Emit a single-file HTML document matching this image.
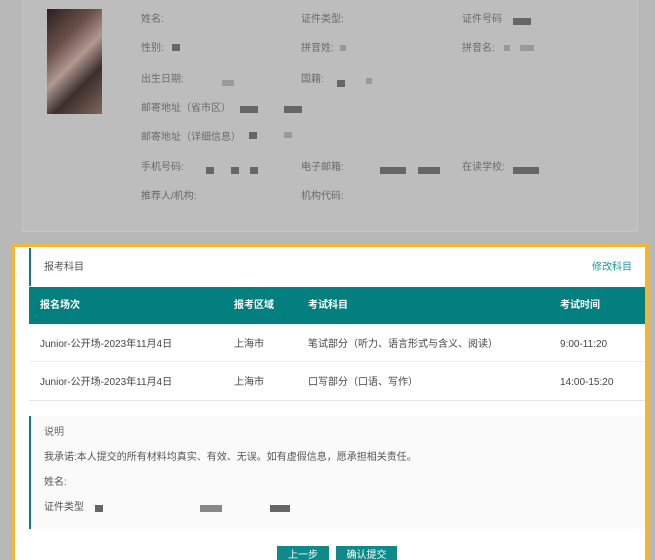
<!DOCTYPE html>
<html style="overflow:hidden;height:560px"><head><meta charset="utf-8"><style>
*{margin:0;padding:0;box-sizing:border-box}
body{width:655px;height:560px;overflow:hidden;background:#b8b8b8;font-family:"Liberation Sans","Noto Sans CJK SC",sans-serif;font-size:10px;line-height:14px;color:#555;position:relative}
.abs{position:absolute}
.top{left:22px;top:0;width:616px;height:232px;background:#bdbdbd;border:1px solid #c6c6c6;border-top:none}
.lbl{position:absolute;color:#6a6a6a;font-size:10px}
.blk{position:absolute;background:#666;width:8px;height:7px}
.bl2{position:absolute;background:#999;width:6px;height:6px}
.frame{left:11px;top:243px;width:638px;height:322px;border:4px solid #f2b632;background:#fff}
.th{color:#fff;font-size:10px;font-weight:bold}
.td{font-size:10px;color:#444}
</style></head><body>
<div class="abs top"></div>
<div class="abs" style="left:47px;top:9px;width:55px;height:105px;background:linear-gradient(135deg,#2a2022,#6a5048 30%,#b09890 50%,#3a2e2c 70%,#80685c);"></div>
<div class="lbl" style="left:141px;top:13px">姓名:</div>
<div class="lbl" style="left:301px;top:13px">证件类型:</div>
<div class="lbl" style="left:462px;top:13px">证件号码</div><div class="blk" style="left:513px;top:18px;width:18px"></div>
<div class="lbl" style="left:141px;top:42px">性别:</div><div class="blk" style="left:172px;top:44px"></div>
<div class="lbl" style="left:301px;top:42px">拼音姓:</div><div class="bl2" style="left:340px;top:45px"></div>
<div class="lbl" style="left:462px;top:42px">拼音名:</div><div class="bl2" style="left:504px;top:45px"></div><div class="bl2" style="left:520px;top:45px;width:14px"></div>
<div class="lbl" style="left:141px;top:73px">出生日期:</div><div class="bl2" style="left:222px;top:80px;width:12px"></div>
<div class="lbl" style="left:301px;top:73px">国籍:</div><div class="blk" style="left:337px;top:80px"></div><div class="bl2" style="left:366px;top:78px"></div>
<div class="lbl" style="left:141px;top:102px">邮寄地址（省市区）</div><div class="blk" style="left:240px;top:106px;width:18px"></div><div class="blk" style="left:284px;top:106px;width:18px"></div>
<div class="lbl" style="left:141px;top:131px">邮寄地址（详细信息）</div><div class="blk" style="left:249px;top:132px"></div><div class="bl2" style="left:284px;top:132px;width:8px"></div>
<div class="lbl" style="left:141px;top:161px">手机号码:</div><div class="blk" style="left:206px;top:167px"></div><div class="blk" style="left:231px;top:167px"></div><div class="blk" style="left:250px;top:167px"></div>
<div class="lbl" style="left:301px;top:161px">电子邮箱:</div><div class="blk" style="left:380px;top:167px;width:26px"></div><div class="blk" style="left:418px;top:167px;width:22px"></div>
<div class="lbl" style="left:462px;top:161px">在读学校:</div><div class="blk" style="left:513px;top:167px;width:26px"></div>
<div class="lbl" style="left:141px;top:190px">推荐人/机构:</div>
<div class="lbl" style="left:301px;top:190px">机构代码:</div>

<div class="abs frame"></div>
<div class="abs" style="left:29px;top:248px;width:2px;height:38px;background:#0b7f80"></div>
<div class="abs" style="left:44px;top:261px;color:#555">报考科目</div>
<div class="abs" style="left:592px;top:261px;color:#1a9a9a">修改科目</div>
<div class="abs" style="left:29px;top:287px;width:616px;height:37px;background:#047f80"></div>
<div class="abs th" style="left:40px;top:299px">报名场次</div>
<div class="abs th" style="left:234px;top:299px">报考区域</div>
<div class="abs th" style="left:308px;top:299px">考试科目</div>
<div class="abs th" style="left:560px;top:299px">考试时间</div>
<div class="abs" style="left:29px;top:361px;width:616px;height:1px;background:#eee"></div>
<div class="abs" style="left:29px;top:400px;width:616px;height:1px;background:#e6e6e6"></div>
<div class="abs td" style="left:40px;top:338px">Junior-公开场-2023年11月4日</div>
<div class="abs td" style="left:234px;top:338px">上海市</div>
<div class="abs td" style="left:308px;top:338px">笔试部分（听力、语言形式与含义、阅读）</div>
<div class="abs td" style="left:560px;top:338px">9:00-11:20</div>
<div class="abs td" style="left:40px;top:376px">Junior-公开场-2023年11月4日</div>
<div class="abs td" style="left:234px;top:376px">上海市</div>
<div class="abs td" style="left:308px;top:376px">口写部分（口语、写作）</div>
<div class="abs td" style="left:560px;top:376px">14:00-15:20</div>

<div class="abs" style="left:29px;top:416px;width:616px;height:113px;background:#fafafa;border-left:2px solid #0b7f80"></div>
<div class="abs td" style="left:44px;top:426px;color:#666">说明</div>
<div class="abs td" style="left:44px;top:451px;color:#555">我承诺:本人提交的所有材料均真实、有效、无误。如有虚假信息，愿承担相关责任。</div>
<div class="abs td" style="left:44px;top:476px;color:#555">姓名:</div>
<div class="abs td" style="left:44px;top:501px;color:#555">证件类型</div>
<div class="blk" style="left:95px;top:505px"></div><div class="blk" style="left:200px;top:505px;width:22px;background:#888"></div><div class="blk" style="left:270px;top:505px;width:20px"></div>

<div class="abs" style="left:277px;top:546px;width:52px;height:22px;background:#0f8a8a;color:#fff;text-align:center;line-height:20px">上一步</div>
<div class="abs" style="left:336px;top:546px;width:61px;height:22px;background:#0f8a8a;color:#fff;text-align:center;line-height:20px">确认提交</div>
</body></html>
